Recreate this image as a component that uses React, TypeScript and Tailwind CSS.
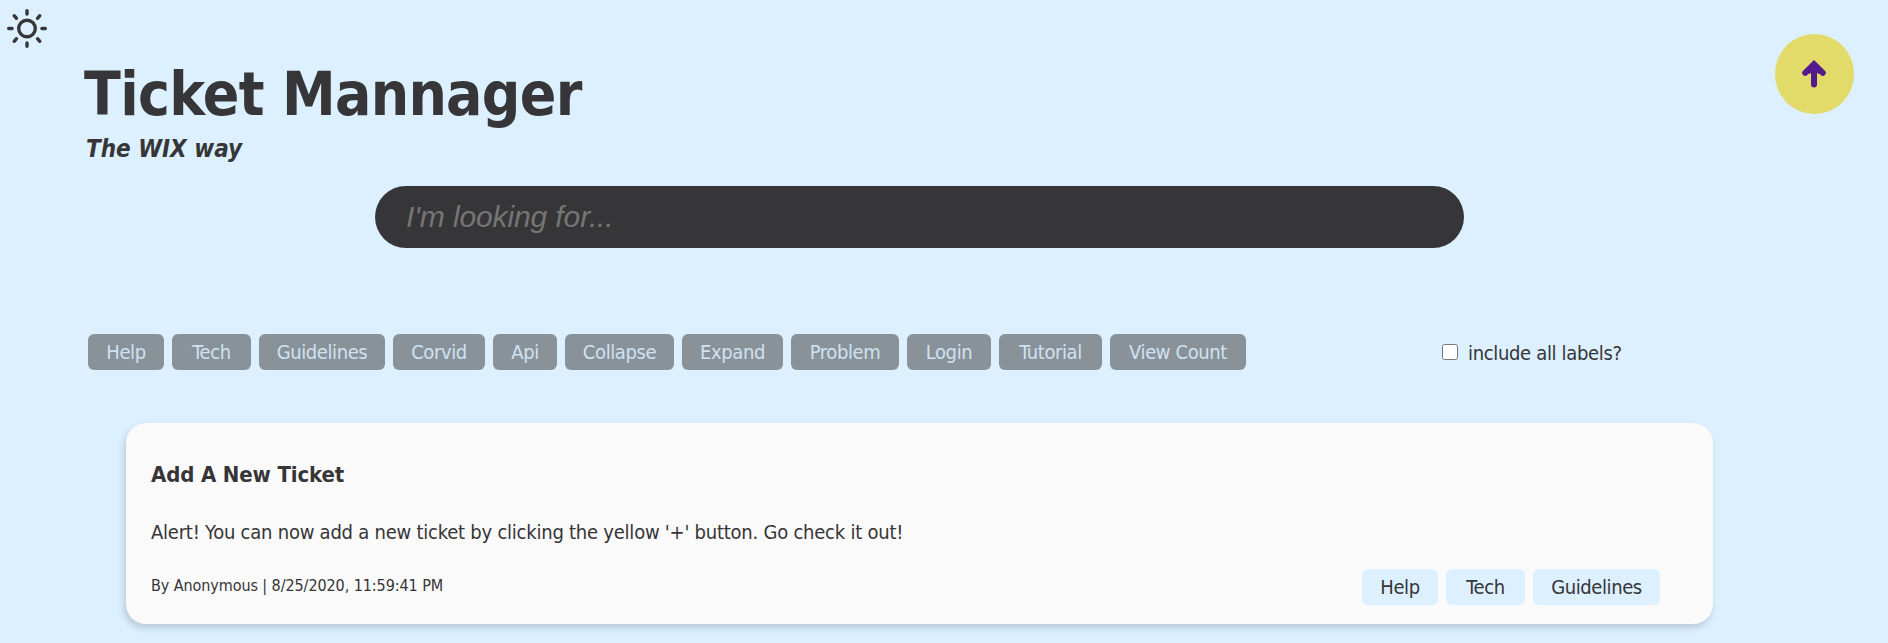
import React from "react";

const filters: [string, string][] = [
  ["Help", "w-[76px]"],
  ["Tech", "w-[79px]"],
  ["Guidelines", "w-[126px]"],
  ["Corvid", "w-[92px]"],
  ["Api", "w-[64px]"],
  ["Collapse", "w-[109px]"],
  ["Expand", "w-[101px]"],
  ["Problem", "w-[108px]"],
  ["Login", "w-[84px]"],
  ["Tutorial", "w-[103px]"],
  ["View Count", "w-[136px]"],
];

const ticketLabels: [string, string][] = [
  ["Help", "w-[76px]"],
  ["Tech", "w-[79px]"],
  ["Guidelines", "w-[127px]"],
];

function SunIcon() {
  return (
    <svg width="42" height="42" viewBox="0 -0.5 42 42" fill="none" stroke="#363537" strokeWidth="3.4" strokeLinecap="round">
      <circle cx="21" cy="21" r="8.3" />
      <path d="M21 3.2v3.4M21 35.4v3.4M2.7 21h3.4M35.9 21h3.4M8.2 8.2l2.3 2.6M33.8 8.2l-2.3 2.6M8.2 33.8l2.3-2.6M33.8 33.8l-2.3-2.6" />
    </svg>
  );
}

function ArrowUpIcon() {
  return (
    <svg width="25" height="28" viewBox="0 0 25 28" fill="none" stroke="#551a8b" strokeWidth="6" strokeLinecap="round">
      <path d="M12 7V24.5M3.2 12.8L12 4.2L20.8 12.8" />
      <path d="M6.5 13L12 8L17.5 13" strokeWidth="3" strokeLinecap="butt" />
    </svg>
  );
}

export default function App() {
  return (
    <div className="relative h-[643px] overflow-hidden bg-[#dcf0ff] font-['DejaVu_Sans_Condensed','DejaVu_Sans',sans-serif] [font-stretch:condensed] text-[#363537]">
      <button className="absolute top-[7px] left-[6px]" aria-label="Toggle theme">
        <SunIcon />
      </button>
      <a className="absolute top-[34px] left-[1775px] flex h-20 w-[79px] items-center justify-center rounded-full bg-[#e2db69]" aria-label="Back to top">
        <ArrowUpIcon />
      </a>

      <header className="flex flex-col pt-[58px] pl-[84px]">
        <h1 className="h-[72px] text-[60px] leading-[72px] font-bold tracking-[-0.7px] whitespace-nowrap">Ticket Mannager</h1>
        <h2 className="mt-[5px] h-7 pl-[2px] text-2xl leading-[29px] font-bold italic whitespace-nowrap">The WIX way</h2>
      </header>

      <div className="mt-[23px] flex pl-[375px]">
        <input
          className="h-[62px] w-[1089px] rounded-full bg-[#363537] px-[31px] font-['Liberation_Sans',sans-serif] text-[30px] tracking-[-0.12px] italic outline-none placeholder:text-[#757575]"
          placeholder="I'm looking for..."
        />
      </div>

      <div className="mt-[86px] flex h-9 items-center gap-2 pl-[88px]">
        {filters.map(([name, width]) => (
          <button key={name} className={`${width} h-9 rounded-md bg-[#8a9299] text-center text-[20px] leading-[37px] tracking-[-0.4px] whitespace-nowrap text-[#cfe2f1]`}>
            {name}
          </button>
        ))}
        <label className="ml-[188px] flex items-center gap-[10px] text-[20px] tracking-[-0.34px] whitespace-nowrap">
          <input type="checkbox" className="h-4 w-4" />
          <span className="relative top-px">include all labels?</span>
        </label>
      </div>

      <article className="mt-[53px] ml-[126px] flex h-[201px] w-[1587px] flex-col rounded-[20px] bg-[#fafafa] pr-[53px] pl-[25px] shadow-[-2px_4px_7px_rgba(0,0,0,0.16)]">
        <h3 className="mt-[38px] h-7 text-[22px] leading-7 font-bold tracking-[-0.15px]">Add A New Ticket</h3>
        <p className="mt-[29px] h-7 text-[20px] leading-7 tracking-[-0.235px]">Alert! You can now add a new ticket by clicking the yellow '+' button. Go check it out!</p>
        <footer className="mt-[23px] flex h-9 items-center justify-between">
          <span className="-mt-0.5 text-base tracking-[-0.08px]">By Anonymous | 8/25/2020, 11:59:41 PM</span>
          <div className="flex gap-2">
            {ticketLabels.map(([name, width]) => (
              <span key={name} className={`${width} h-9 rounded-md bg-[#dcf0ff] text-center text-[20px] leading-[37px] tracking-[-0.4px]`}>
                {name}
              </span>
            ))}
          </div>
        </footer>
      </article>
    </div>
  );
}
